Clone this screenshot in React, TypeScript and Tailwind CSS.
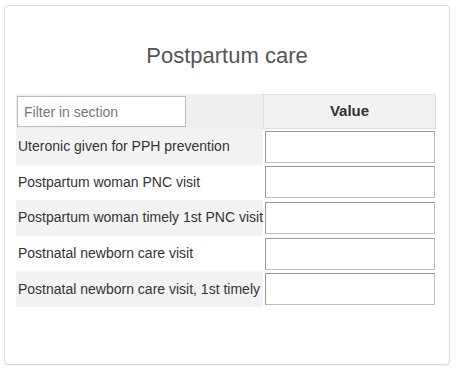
const rows = [
  "Uteronic given for PPH prevention",
  "Postpartum woman PNC visit",
  "Postpartum woman timely 1st PNC visit",
  "Postnatal newborn care visit",
  "Postnatal newborn care visit, 1st timely",
];

export default function App(): JSX.Element {
  return (
    <div className="h-[374px] w-[457px] bg-white pl-[4px] pt-[5px] font-['Liberation_Sans',Arial,sans-serif]">
      <div className="h-[360px] w-[446px] rounded-[4px] border border-[#dcdcdc] bg-white px-[11px] shadow-[0_1px_1px_rgba(0,0,0,0.06)]">
        <h2 className="pt-[37px] pb-[25px] text-center text-[22px] leading-[26px] text-[#555]">
          Postpartum care
        </h2>

        <div className="grid w-[420px] grid-cols-[247px_173px]">
          <div className="flex h-[35px] items-center bg-[#efefef] pl-[1px]">
            <input
              type="text"
              placeholder="Filter in section"
              className="h-[31px] w-[169px] border border-[#bbb] bg-white px-[6px] text-[14px] text-[#333] placeholder:text-[#777] outline-none"
            />
          </div>
          <div className="flex h-[35px] items-center justify-center border border-[#ddd] bg-[#f2f2f2] text-[15px] font-bold text-[#333]">
            Value
          </div>

          {rows.map((label, i) => (
            <div key={label} className="contents">
              <div
                className={`flex h-[35.6px] items-center whitespace-nowrap pl-[2px] text-[14px] text-[#333] ${
                  i % 2 === 0 ? "bg-[#f3f3f3]" : "bg-white"
                }`}
              >
                {label}
              </div>
              <div className="flex h-[35.6px] items-center pl-[2px]">
                <input
                  type="text"
                  className="h-[32px] w-[170px] border border-[#bdbdbd] border-t-[#999] border-l-[#999] bg-white outline-none"
                />
              </div>
            </div>
          ))}
        </div>
      </div>
    </div>
  );
}
